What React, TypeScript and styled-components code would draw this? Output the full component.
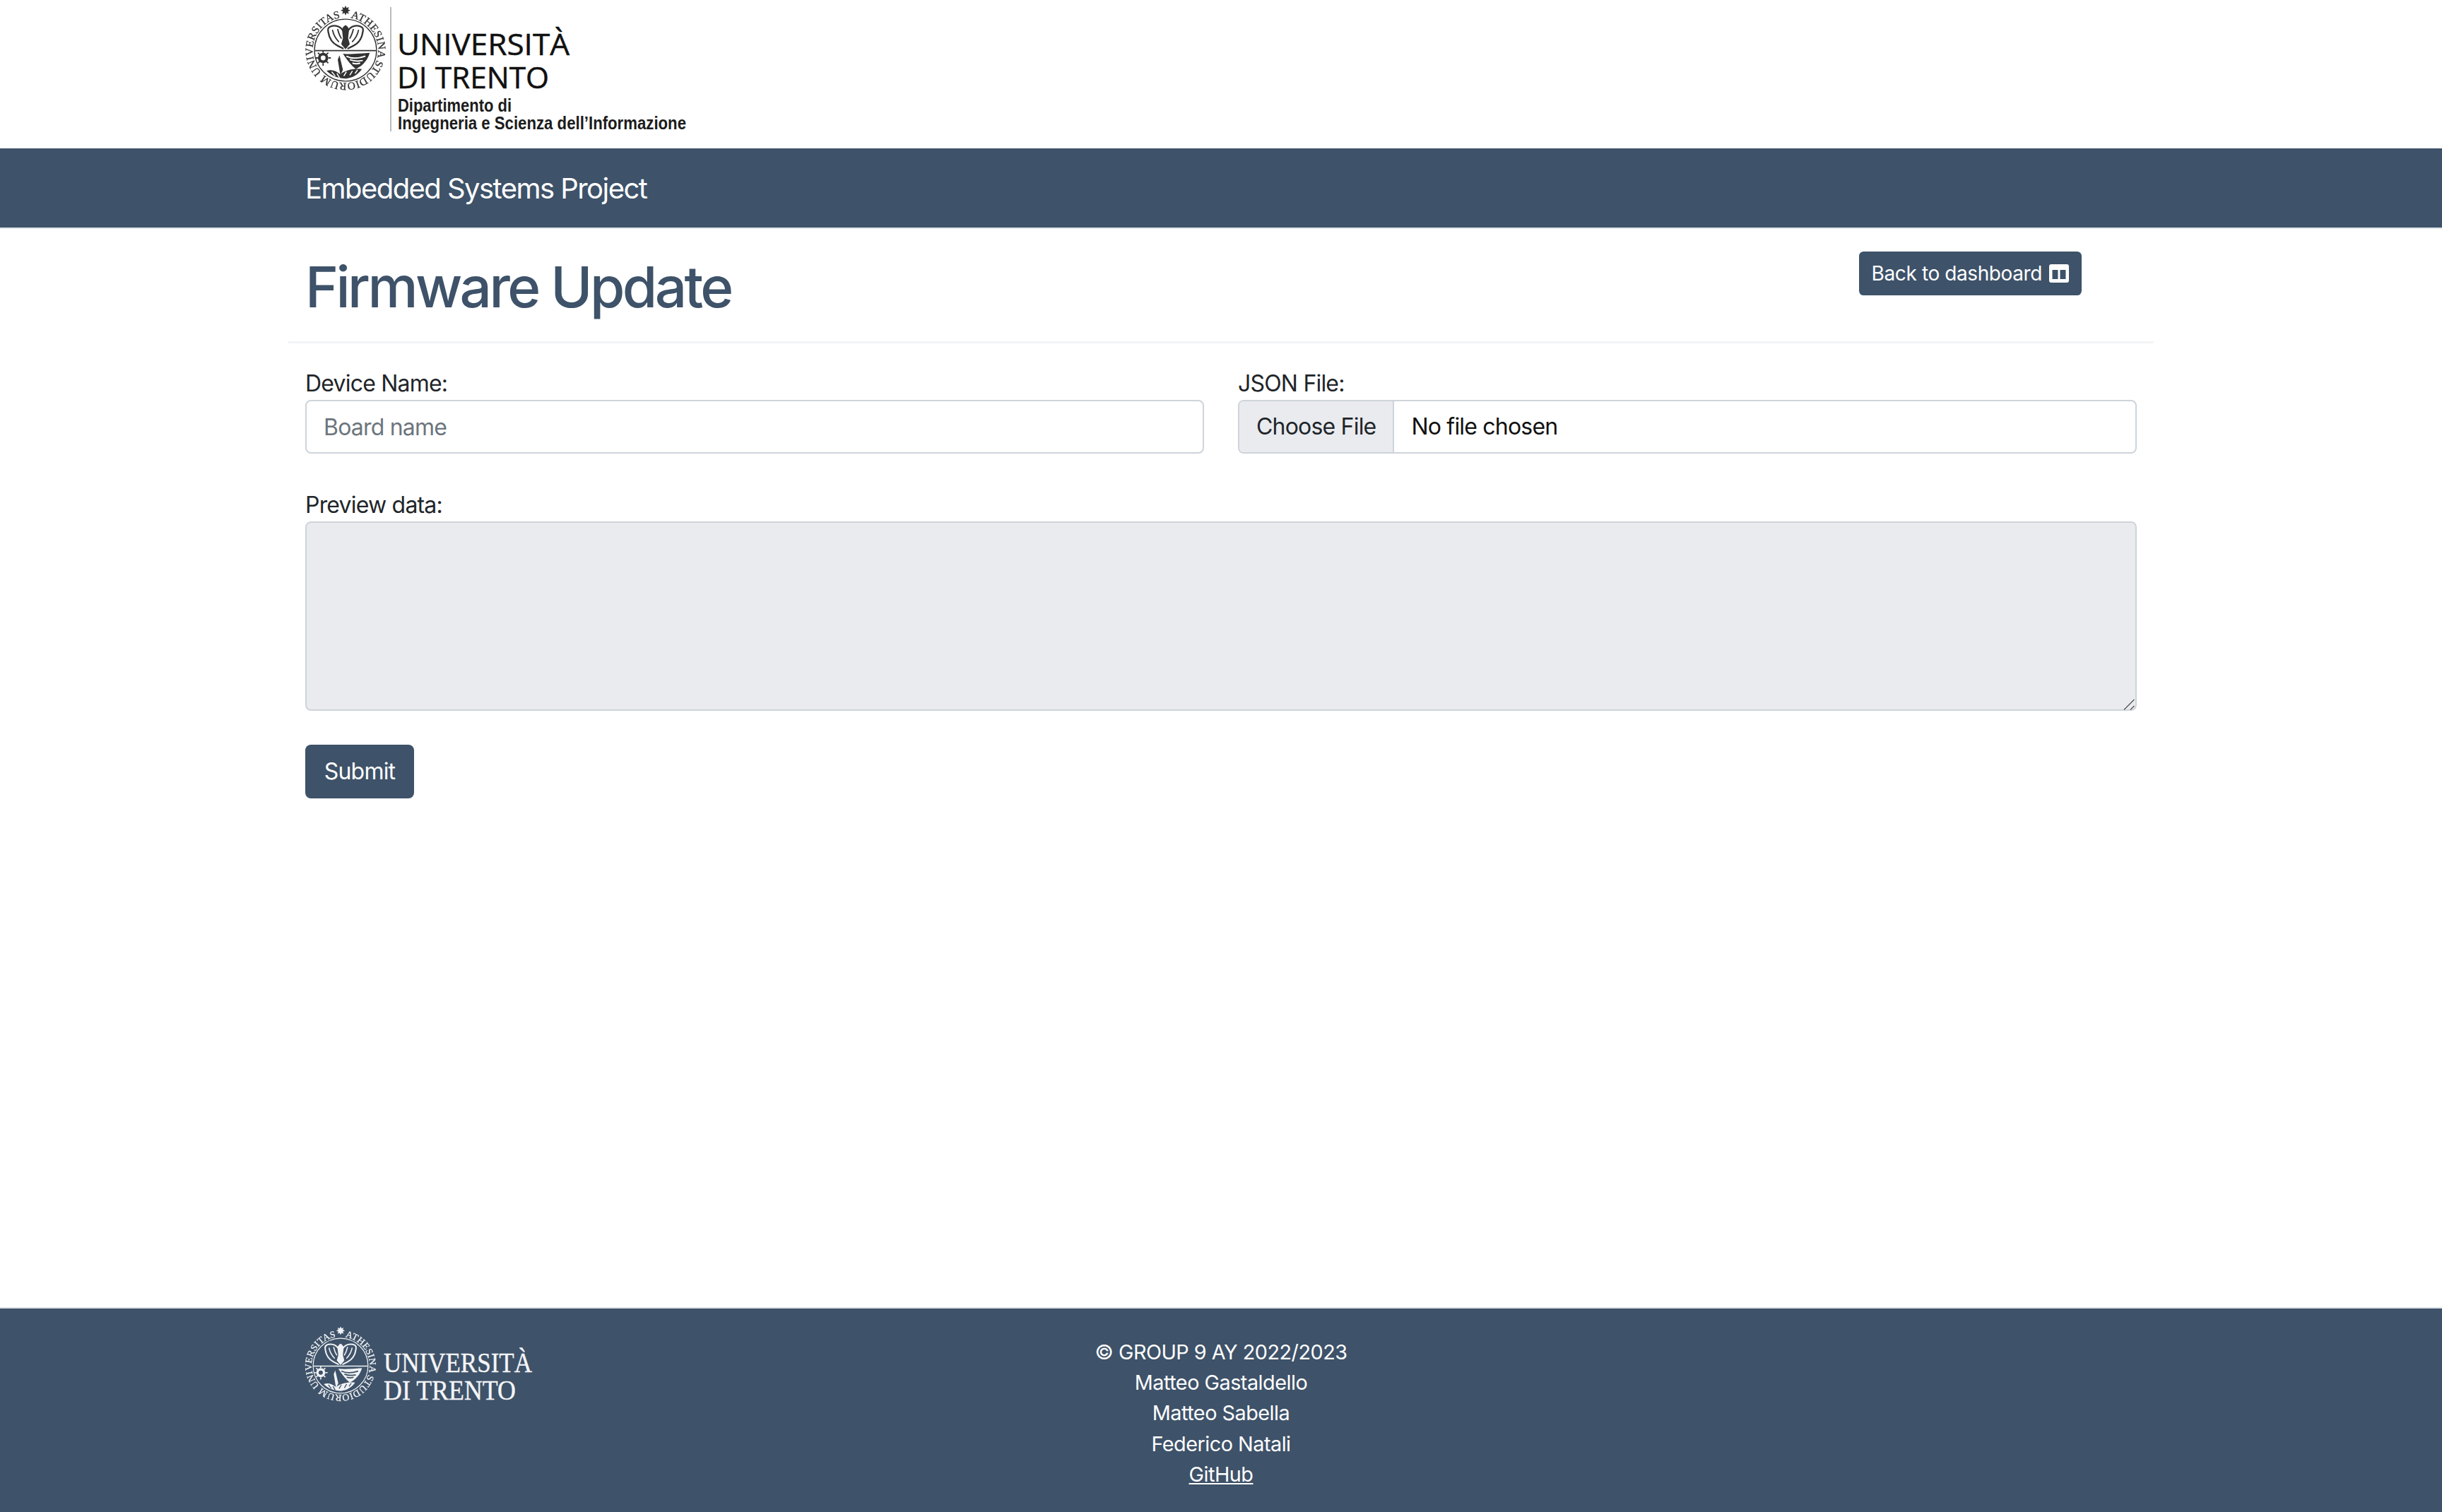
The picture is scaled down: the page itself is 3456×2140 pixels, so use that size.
import React from "react";
import styled, { createGlobalStyle } from "styled-components";

const GlobalStyle = createGlobalStyle`
  * {
    box-sizing: border-box;
  }
  body {
    margin: 0;
    background: #fff;
    color: #212529;
    font-family: Inter, "Liberation Sans", sans-serif;
    font-size: 32px;
    line-height: 1.5;
    letter-spacing: -0.8px;
  }
  input, button, textarea {
    letter-spacing: inherit;
  }
`;

const Page = styled.div`
  display: flex;
  flex-direction: column;
  min-height: 2140px;
`;

const Container = styled.div`
  width: 2640px;
  margin: 0 auto;
  padding: 0 24px;
`;

const LogoBar = styled(Container)`
  height: 210px;
`;

const LogoSvg = styled.svg`
  display: block;
  overflow: visible;
`;

const Navbar = styled.nav`
  height: 114px;
  background: #3e5269;
  border-bottom: 2px solid #e0e4e8;
`;

const Brand = styled.a`
  display: block;
  color: #fff;
  font-size: 40px;
  line-height: 114px;
  letter-spacing: -1.55px;
`;

const TitleRow = styled.div`
  display: flex;
  justify-content: space-between;
  align-items: flex-start;
  width: 2640px;
  margin: 0 auto;
  height: 162px;
  padding: 32px 102px 0 24px;
  border-bottom: 3px solid #f3f4f6;
`;

const Title = styled.h1`
  margin: 2px 0 0;
  color: #3e5269;
  font-size: 80px;
  font-weight: 500;
  line-height: 96px;
  letter-spacing: -3.6px;
`;

const BackButton = styled.a`
  display: flex;
  align-items: center;
  gap: 10px;
  height: 62px;
  padding: 0 18px;
  background: #3e5269;
  border-radius: 6.4px;
  color: #fff;
  font-size: 28px;
  letter-spacing: -0.4px;
`;

const Form = styled.form`
  display: flex;
  flex-direction: column;
  gap: 48px;
  padding-top: 32px;
`;

const Row = styled.div`
  display: grid;
  grid-template-columns: 1fr 1fr;
  gap: 48px;
`;

const Field = styled.div`
  display: flex;
  flex-direction: column;
  position: relative;
`;

const Label = styled.label`
  height: 48px;
  padding-top: 1px;
`;

const TextInput = styled.input`
  height: 76px;
  padding: 12px 24px;
  border: 2px solid #ced4da;
  border-radius: 8px;
  color: #212529;
  font: inherit;
  &::placeholder {
    color: #6c757d;
    opacity: 1;
  }
`;

const FilePicker = styled.label`
  display: flex;
  align-items: center;
  height: 76px;
  border: 2px solid #ced4da;
  border-radius: 8px;
  overflow: hidden;
`;

const FileButton = styled.span`
  display: flex;
  align-items: center;
  height: 100%;
  padding: 0 24px;
  background: #e9ebef;
  border-right: 2px solid #ced4da;
`;

const FileName = styled.span`
  padding: 0 24px;
  color: #111;
`;

const Preview = styled.textarea`
  display: block;
  width: 100%;
  height: 268px;
  padding: 12px 24px;
  background: #e9ebef;
  border: 2px solid #ced4da;
  border-radius: 8px;
  font: inherit;
  resize: none;
`;

const Grip = styled.svg`
  position: absolute;
  right: 3px;
  bottom: 1px;
`;

const Submit = styled.button`
  align-self: flex-start;
  width: 154px;
  height: 76px;
  padding: 0;
  background: #3e5269;
  border: none;
  border-radius: 8px;
  color: #fff;
  font: inherit;
`;

const Footer = styled.footer`
  margin-top: auto;
  height: 290px;
  background: #3e5269;
  border-top: 2px solid #e0e4e8;
  color: #fff;
`;

const FooterGrid = styled.div`
  display: grid;
  grid-template-columns: 856px 880px;
  width: 2640px;
  margin: 0 auto;
  padding: 30px 24px 0;
`;

const Credits = styled.div`
  padding-top: 10px;
  font-size: 28.8px;
  line-height: 43.2px;
  letter-spacing: -0.5px;
  text-align: center;
  a {
    color: #fff;
    text-decoration: underline;
  }
`;

// one seal for both logos, only the colour and background change
const Seal = ({ color, bg, id }: { color: string; bg: string; id: string }) => (
  <g fill={color} stroke="none">
    <defs>
      <path id={id} d="M 50 12 A 38 38 0 1 1 49.9 12" />
    </defs>
    <text fontFamily="'Liberation Serif', serif" fontSize="12.5" letterSpacing="0" stroke={color} strokeWidth=".25">
      <textPath href={`#${id}`} startOffset="6" textLength="226" lengthAdjust="spacingAndGlyphs">
        ATHESINA STUDIORUM UNIVERSITAS
      </textPath>
    </text>
    <path d="M50 1.5l1.5 3.4 3.4-1.4-1.4 3.4 3.4 1.5-3.4 1.5 1.4 3.4-3.4-1.4-1.5 3.4-1.5-3.4-3.4 1.4 1.4-3.4-3.4-1.5 3.4-1.5-1.4-3.4 3.4 1.4z" transform="translate(9 -2.9) scale(.82)" />
    <circle cx="50" cy="50" r="36" fill="none" stroke={color} strokeWidth="1.1" />
    <path d="M14.5 50.5h71" stroke={color} strokeWidth="1.3" />
    {/* eagle, drawn as outline with feathers */}
    <g fill="none" stroke={color} strokeWidth="1.9" strokeLinecap="round">
      <path d="M47 27c-3-4-8-6-13-5-4 1-5 3-4 7 1 7 5 13 11 16l6 3" />
      <path d="M53 27c3-4 8-6 13-5 4 1 5 3 4 7-1 7-5 13-11 16l-6 3" />
      <path d="M35 27c1 5 3 9 7 13M41 26c1 4 2 7 4 10M65 27c-1 5-3 9-7 13M59 26c-1 4-2 7-4 10" strokeWidth="1.5" />
    </g>
    <path d="M50 21c-2 1-4 3-4 6l1 9-2 7 5 6 5-6-2-7 1-9c0-3-2-5-4-6z" />
    {/* sun, left of the field */}
    <circle cx="24" cy="59" r="6" />
    <circle cx="24" cy="59" r="2.8" fill={bg} />
    <path d="M24 50v3M24 65v3M15 59h3M30 59h3M18 53l2 2M28 63l2 2M30 53l-2 2M20 63l-2 2" stroke={color} strokeWidth="1.5" />
    {/* wing and plants */}
    <path d="M47 54c9 1 20 0 31-1-2 8-8 15-16 19-5-4-10-10-15-18z" />
    <path d="M51 57c6 3 13 3 22 0M55 61c5 2 10 2 15 1M58 65c3 1 6 1 9 0" stroke={bg} strokeWidth="1.6" fill="none" />
    <path d="M43 56l4 17-3 6-3-18z" />
    <path d="M28 74c6-2 11 0 16 4 6-5 15-7 25-6-5 7-11 10-18 11-9 0-17-3-23-9z" />
    <path d="M34 75l4 5M40 77l3 5M48 80l3-5M55 79l3-5M61 77l3-4" stroke={bg} strokeWidth="1.2" />
  </g>
);

const HeaderLogo = () => (
  <LogoSvg width="600" height="200" viewBox="0 0 600 200">
    <g transform="translate(-4 10) scale(1.22)" style={{ filter: "blur(.55px)" }}>
      <Seal color="#333" bg="#fff" id="seal-top" />
    </g>
    <path d="M121 10v176" stroke="#a3a3a3" strokeWidth="1.5" />
    <g fontFamily="'Open Sans', 'Liberation Sans', sans-serif" fill="#111" stroke="#111" strokeWidth=".5" fontSize="42" letterSpacing="0">
      <text x="130" y="78" textLength="244" lengthAdjust="spacingAndGlyphs">UNIVERSITÀ</text>
      <text x="130" y="125" textLength="215" lengthAdjust="spacingAndGlyphs">DI TRENTO</text>
    </g>
    <g fontFamily="'Liberation Sans', sans-serif" fontWeight="700" fill="#1c1c1c" fontSize="26" letterSpacing="0">
      <text x="131" y="158" textLength="161" lengthAdjust="spacingAndGlyphs">Dipartimento di</text>
      <text x="131" y="183" textLength="408" lengthAdjust="spacingAndGlyphs">Ingegneria e Scienza dell’Informazione</text>
    </g>
  </LogoSvg>
);

const FooterLogo = () => (
  <LogoSvg width="360" height="110" viewBox="0 0 360 110">
    <g transform="translate(-4 -3) scale(1.08)" style={{ filter: "blur(.5px)" }}>
      <Seal color="#f0f2f4" bg="#3e5269" id="seal-bottom" />
    </g>
    <g fontFamily="'Liberation Serif', serif" fill="#f4f5f7" stroke="#f4f5f7" strokeWidth=".4" fontSize="40" letterSpacing="0">
      <text x="111" y="60" textLength="210" lengthAdjust="spacingAndGlyphs">UNIVERSITÀ</text>
      <text x="111" y="99" textLength="187" lengthAdjust="spacingAndGlyphs">DI TRENTO</text>
    </g>
  </LogoSvg>
);

const SplitIcon = () => (
  <svg width="28" height="26" viewBox="0 0 28 26">
    <path
      fill="#fff"
      fillRule="evenodd"
      d="M3 0h22a3 3 0 0 1 3 3v20a3 3 0 0 1-3 3H3a3 3 0 0 1-3-3V3a3 3 0 0 1 3-3zM4.5 8v13h8V8zM15.5 8v13h8V8z"
    />
  </svg>
);

export default function App() {
  return (
    <Page>
      <GlobalStyle />
      <LogoBar>
        <HeaderLogo />
      </LogoBar>
      <Navbar>
        <Container>
          <Brand>Embedded Systems Project</Brand>
        </Container>
      </Navbar>
      <TitleRow>
        <Title>Firmware Update</Title>
        <BackButton>
          Back to dashboard <SplitIcon />
        </BackButton>
      </TitleRow>
      <Container>
        <Form>
          <Row>
            <Field>
              <Label htmlFor="device">Device Name:</Label>
              <TextInput id="device" placeholder="Board name" />
            </Field>
            <Field>
              <Label>JSON File:</Label>
              <FilePicker>
                <FileButton>Choose File</FileButton>
                <FileName>No file chosen</FileName>
              </FilePicker>
            </Field>
          </Row>
          <Field>
            <Label htmlFor="preview">Preview data:</Label>
            <Preview id="preview" disabled />
            <Grip width="16" height="16" viewBox="0 0 16 16">
              <path d="M1 15.5L15.5 1M10 15.5l5.5-5.5" stroke="#555" strokeWidth="1.3" fill="none" />
            </Grip>
          </Field>
          <Submit type="button">Submit</Submit>
        </Form>
      </Container>
      <Footer>
        <FooterGrid>
          <FooterLogo />
          <Credits>
            <div>© GROUP 9 AY 2022/2023</div>
            <div>Matteo Gastaldello</div>
            <div>Matteo Sabella</div>
            <div>Federico Natali</div>
            <a>GitHub</a>
          </Credits>
        </FooterGrid>
      </Footer>
    </Page>
  );
}
